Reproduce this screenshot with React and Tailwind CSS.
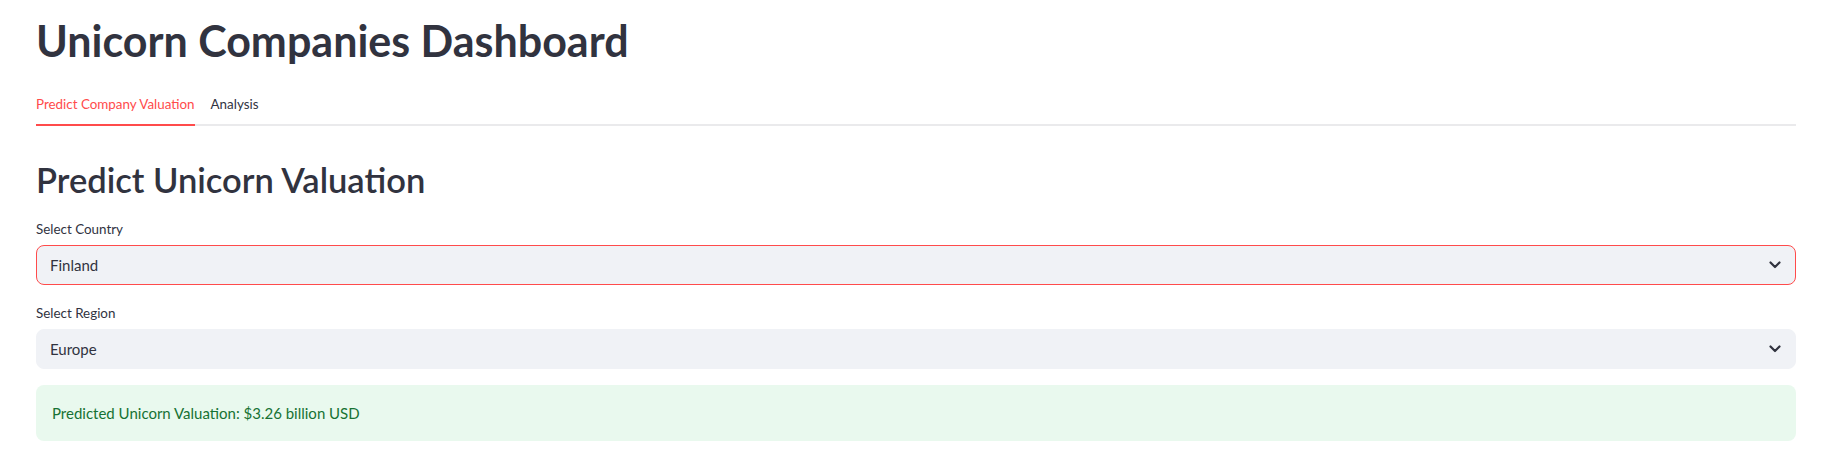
import React, { useState } from "react";

const Chevron = () => (
  <svg width="12" height="8" viewBox="0 0 12 8" className="shrink-0">
    <path d="M1.5 1.5 L6 6 L10.5 1.5" fill="none" stroke="#31333f" strokeWidth="2.2" strokeLinecap="round" strokeLinejoin="round" />
  </svg>
);

const SelectBox = ({ label, value, focused, className }) => (
  <div className={`flex flex-col ${className}`}>
    <label className="text-[13.4px] leading-[20px] text-[#31333f] mb-[6px]">{label}</label>
    <div
      className={`flex h-[40px] items-center justify-between rounded-[8px] border bg-[#f0f2f6] pl-[13px] pr-[14px] ${
        focused ? "border-[#ff4b4b]" : "border-[#f0f2f6]"
      }`}
    >
      <span className="text-[15px] text-[#31333f]">{value}</span>
      <Chevron />
    </div>
  </div>
);

const App = () => {
  const [tab, setTab] = useState("predict");
  const tabs = [
    { id: "predict", name: "Predict Company Valuation" },
    { id: "analysis", name: "Analysis" },
  ];

  return (
    <div className="min-h-screen bg-white pl-[36px] pr-[25px] font-['Lato',sans-serif] text-[#31333f]">
      <h1 className="pt-[15px] text-[43px] font-bold leading-[1.2]">Unicorn Companies Dashboard</h1>

      <div className="mt-[22px] flex gap-4 border-b-2 border-[#eaeaec]">
        {tabs.map((t) => (
          <button
            key={t.id}
            onClick={() => setTab(t.id)}
            className={`-mb-[2px] border-b-2 pt-[5px] pb-[10px] text-[13.4px] leading-[20px] ${
              tab === t.id ? "border-[#ff4b4b] text-[#ff4b4b]" : "border-transparent text-[#31333f]"
            }`}
          >
            {t.name}
          </button>
        ))}
      </div>

      <h2 className="mt-[33px] text-[34.5px] font-semibold leading-[1.2]">Predict Unicorn Valuation</h2>

      <div className="mt-[19px] flex flex-col">
        <SelectBox label="Select Country" value="Finland" focused className="mb-[18px]" />
        <SelectBox label="Select Region" value="Europe" className="mb-[16px]" />
        <div className="rounded-[8px] bg-[#e9f9ee] px-[16px] py-[16px] text-[15px] leading-[24px] text-[#177233]">
          Predicted Unicorn Valuation: $3.26 billion USD
        </div>
      </div>
    </div>
  );
};

export default App;
